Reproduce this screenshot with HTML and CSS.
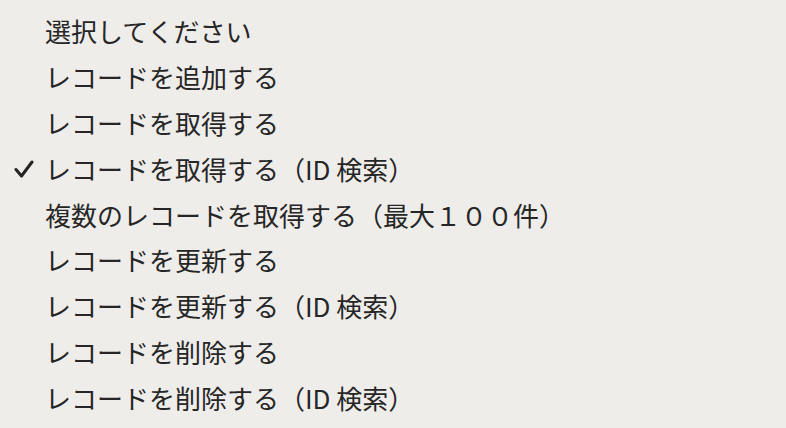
FILE: index.html
```html
<!DOCTYPE html>
<html lang="ja">
<head>
    <meta charset="UTF-8">
    <title>選択メニュー</title>
    <link rel="stylesheet" href="styles.css">
</head>
<body>
    <ul class="menu">
        <li class="item">選択してください</li>
        <li class="item">レコードを追加する</li>
        <li class="item">レコードを取得する</li>
        <li class="item checked">
            <svg class="check" viewBox="0 0 20 18" width="20" height="18">
                <path d="M2 9.5 L7.5 16 L18 2" fill="none" stroke="#232323" stroke-width="3" stroke-linecap="round" stroke-linejoin="round"/>
            </svg>
            レコードを取得する（ID 検索）
        </li>
        <li class="item">複数のレコードを取得する（最大１００件）</li>
        <li class="item">レコードを更新する</li>
        <li class="item">レコードを更新する（ID 検索）</li>
        <li class="item">レコードを削除する</li>
        <li class="item">レコードを削除する（ID 検索）</li>
    </ul>
</body>
</html>
```

FILE: styles.css
```css
body {
    margin: 0;
    background: #eeedea;
    font-family: "Noto Sans CJK JP", "Noto Sans", sans-serif;
    color: #262626;
}
.menu {
    list-style: none;
    margin: 0;
    padding: 8px 0 0;
}
.item {
    position: relative;
    height: 45.9px;
    line-height: 45.9px;
    padding-left: 45px;
    font-size: 26px;
    white-space: nowrap;
}
.check {
    position: absolute;
    left: 14px;
    top: 14px;
}
```
